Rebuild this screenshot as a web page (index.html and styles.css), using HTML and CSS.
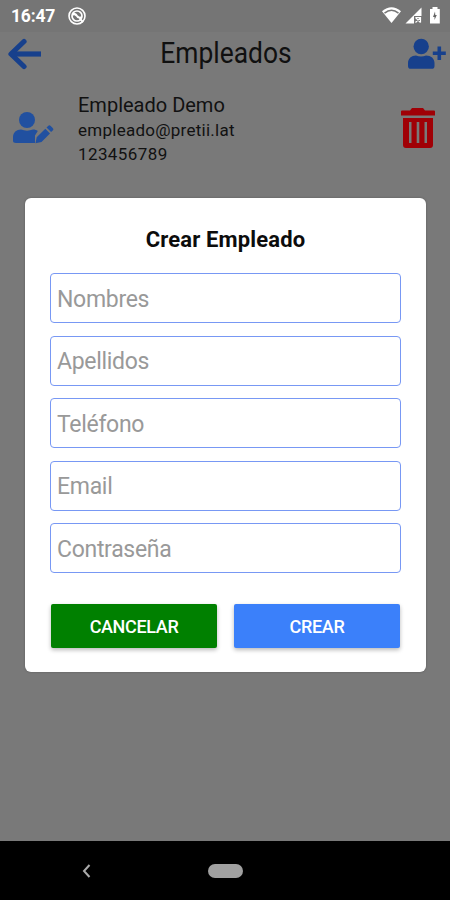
FILE: index.html
```html
<!DOCTYPE html>
<html lang="es">
<head>
<meta charset="utf-8">
<title>Empleados</title>
<link rel="stylesheet" href="styles.css">
</head>
<body>
<div class="screen">
  <div class="status">
    <span class="clock">16:47</span>
    <svg class="notice" width="18" height="18" viewBox="0 0 18 18" fill="none" stroke="#fff"><circle cx="9" cy="9" r="8" stroke-width="1.6"/><circle cx="9" cy="9" r="5" stroke-width="1.7"/><path d="M5 6l8 6M5 8c2-2 3-1 4 1s3 2 4 1M12 12l3 3" stroke-width="1.8"/></svg>
    <svg class="signals" width="60" height="18" viewBox="0 0 60 18"><path fill="#fff" d="M0 4.200Q9.500-3.500 19 4.200L9.500 16z"/><path d="M2.500 6.200Q9.500.500 16.500 6.200" fill="none" stroke="#777" stroke-width="1.500"/><path fill="#fff" d="M39.500.500V9H32v7.500H23.500z"/><path d="M33.500 10.500l5 5M38.500 10.500l-5 5M33.500 10.500h5v5" fill="none" stroke="#fff" stroke-width="1.200"/><path fill="#fff" d="M50.500 0h5v2h2.300v14.500H48V2h2.500z"/><path fill="#666" d="M53 4.500L51 10h1.500v3l2.300-5h-1.500z"/></svg>
  </div>
  <header class="header">
    <svg class="back" width="34" height="32" viewBox="0 0 34 32" fill="none" stroke="#17408c" stroke-width="5.200" stroke-linejoin="round"><path stroke-linecap="round" d="M17 3.500L4 16l13 12.500"/><path d="M4 16H34"/></svg>
    <h1 class="title">Empleados</h1>
    <svg class="add" width="38" height="32" viewBox="0 0 38 32" fill="#17408c"><circle cx="13.200" cy="8.500" r="7.700"/><path d="M0 28v-3c0-4.500 3.500-7.500 8-7.500 3 1.300 7 1.300 10 0 5 0 8.500 3 8.500 7.500v3c0 2-1 2.800-3 2.800H3c-2 0-3-.800-3-2.800z"/><path d="M29.500 8.500h3.600v5h4.700v3.400h-4.700v5.200h-3.600v-5.200h-4.700v-3.400h4.700z"/></svg>
  </header>
  <div class="row">
    <svg class="edit" width="42" height="34" viewBox="0 0 42 34" fill="#2150a0"><circle cx="14" cy="9" r="8"/><path d="M0 30v-4c0-4.500 3.500-7.500 8-7.500 4 1.500 8 1.500 12 0 2 0 3.500.500 4.800 1.500L22 24.500V32H3c-2 0-3-.700-3-2z"/><path d="M32.300 17.700l4.700 4.700L28.500 31l-6 1.300 1.200-6zM33.500 16.500l1.600-1.600c.900-.900 1.700-.900 2.600 0l2 2c.900.900.900 1.700 0 2.600l-1.600 1.600z"/></svg>
    <div class="info">
      <div class="name">Empleado Demo</div>
      <div class="detail mail">empleado@pretii.lat</div>
      <div class="detail phone">123456789</div>
    </div>
    <svg class="trash" width="36" height="41" viewBox="0 0 36 41"><path fill="#a00006" fill-rule="evenodd" d="M12 0h11l2 2.500h9q1 0 1 1V7.500H1v-4q0-1 1-1h8zM3 10h30v27q0 3-3 3H6q-3 0-3-3zM9 14v21h2.500V14zM16.700 14v21h2.600V14zM24.500 14v21H27V14z"/></svg>
  </div>
  <main class="backdrop">
    <section class="modal">
      <h2 class="heading">Crear Empleado</h2>
      <div class="fields">
        <div class="field">Nombres</div>
        <div class="field">Apellidos</div>
        <div class="field">Teléfono</div>
        <div class="field">Email</div>
        <div class="field">Contraseña</div>
      </div>
      <div class="actions">
        <button class="btn cancel">CANCELAR</button>
        <button class="btn create">CREAR</button>
      </div>
    </section>
  </main>
  <nav class="nav">
    <svg class="nav-back" width="9" height="14" viewBox="0 0 9 14" fill="none" stroke="#aaa" stroke-width="2"><path d="M7.500 1L2 7l5.500 6"/></svg>
    <div class="pill"></div>
  </nav>
</div>
</body>
</html>
```
FILE: styles.css
```css
* { box-sizing: border-box; }
body { margin: 0; font-family: Roboto, sans-serif; }
.screen { width: 450px; height: 900px; display: flex; flex-direction: column; background: #797979; overflow: hidden; }
svg { display: block; flex: none; }
.status { height: 32px; flex: none; display: flex; align-items: center; padding: 0 8px 0 11px; background: #757575; }
.clock { width: 57px; font-size: 17.5px; letter-spacing: -.2px; font-weight: 700; color: #fff; }
.signals { margin-left: auto; }
.header { height: 52px; flex: none; display: flex; align-items: flex-start; justify-content: space-between; padding: 6px 4px 0 7px; }
.title { margin: -3px 0 0; width: 130px; font-size: 30px; line-height: 35px; font-weight: 400; color: #101010; display: flex; justify-content: center; transform: scaleX(.88); }
.back { margin-right: 2px; }
.row { height: 84px; flex: none; display: flex; padding: 9px 14px 0 13px; color: #111; }
.edit { margin-top: 18px; }
.trash { margin-top: 15px; }
.info { flex: 1; padding-left: 23px; white-space: nowrap; }
.name { font-size: 20px; line-height: 24px; }
.detail { font-size: 17px; line-height: 24px; letter-spacing: .26px; }
.phone { letter-spacing: .4px; }
.mail { margin-top: 1px; }
.backdrop { flex: 1; padding: 30px 24px 0 25px; }
.modal { height: 474px; background: #fff; border-radius: 6px; padding: 28px 25px 0; box-shadow: 0 0 2px #555; }
.heading { margin: 0; font-size: 22px; line-height: 28px; letter-spacing: .15px; font-weight: 700; text-align: center; color: #0c0c0c; }
.fields { margin-top: 19px; display: grid; gap: 12.5px; }
.field { height: 50px; border: 1px solid #7898f4; border-radius: 4px; padding: 2px 6px 0; display: flex; align-items: center; font-size: 23px; letter-spacing: -.3px; color: #999; }
.actions { margin: 31px 1px 0; display: grid; grid-template-columns: 1fr 1fr; gap: 17px; }
.btn { height: 43.5px; border: 0; border-radius: 2px; padding: 1px 0 0; font: 500 18px Roboto, sans-serif; letter-spacing: -.35px; color: #fff; box-shadow: 0 2px 4px rgba(0,0,0,.28); }
.cancel { background: #008000; }
.create { background: #3b80fa; }
.nav { height: 59px; flex: none; background: #000; display: flex; align-items: center; padding-left: 82px; }
.pill { width: 35px; height: 14px; border-radius: 7px; background: #a0a0a0; margin-left: 117px; }
```
